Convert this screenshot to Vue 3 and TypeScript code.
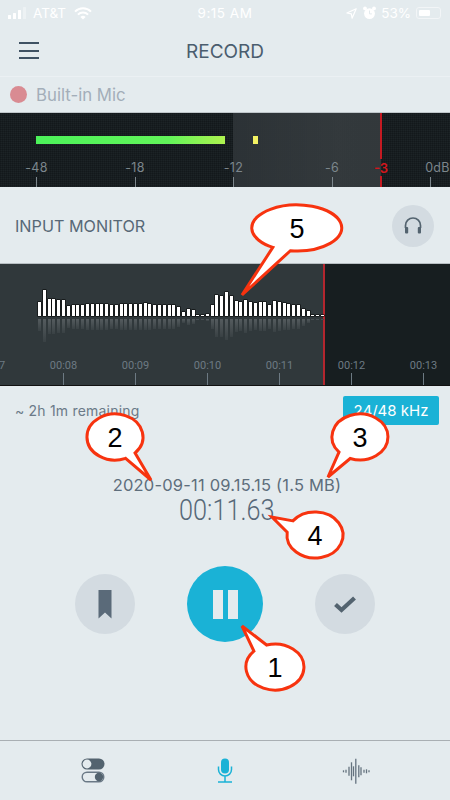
<script setup lang="ts">
const peaks = [
  14, 26, 17, 17, 16, 16, 10, 11, 11, 11.5, 12, 12.5, 12, 12, 12, 11, 11, 12, 12, 12,
  12, 12, 13, 12, 11, 11, 11, 11.5, 11, 9, 4, 7, 6, 1.5, 1.5, 2, 11.5, 21, 20, 24,
  20, 15, 14, 16, 14, 13, 14, 14, 11, 15, 14, 13, 12.5, 11, 11.5, 7.5, 5, 1.5, 1.5, 1.5,
]
const seconds = ['00:07', '00:08', '00:09', '00:10', '00:11', '00:12', '00:13']
const levels = ['-48', '-18', '-12', '-6', '0dB']
const spectrum = [
  [342.5, 2], [345, 3], [348, 9], [350.5, 18], [352.5, 10], [354.8, 25], [357.8, 12], [360, 8], [363, 3], [365.5, 4], [368, 2],
]

interface Callout {
  label: string
  cx: number
  cy: number
  rx: number
  ry: number
  a: [number, number]
  tip: [number, number]
  b: [number, number]
}
const callouts: Callout[] = [
  { label: '1', cx: 275, cy: 667, rx: 29, ry: 23, a: [267, 646], tip: [242, 626], b: [255, 652] },
  { label: '2', cx: 115, cy: 437, rx: 28, ry: 23, a: [126, 459], tip: [151, 480], b: [135, 453] },
  { label: '3', cx: 360, cy: 437, rx: 28, ry: 23, a: [338, 453], tip: [328, 477], b: [350, 459] },
  { label: '4', cx: 315, cy: 535, rx: 28, ry: 23, a: [293, 521], tip: [272, 517], b: [285, 532] },
  { label: '5', cx: 297, cy: 228, rx: 45, ry: 23, a: [272, 248], tip: [242, 295], b: [290, 252] },
]
// snap the tail base onto the ellipse so the arc keeps its radii
function onEllipse(c: Callout, p: [number, number]) {
  const t = Math.atan2((p[1] - c.cy) / c.ry, (p[0] - c.cx) / c.rx)
  return `${(c.cx + c.rx * Math.cos(t)).toFixed(1)} ${(c.cy + c.ry * Math.sin(t)).toFixed(1)}`
}
function bubble(c: Callout) {
  return `M${onEllipse(c, c.a)} L${c.tip[0]} ${c.tip[1]} L${onEllipse(c, c.b)} A${c.rx} ${c.ry} 0 1 0 ${onEllipse(c, c.a)} Z`
}
</script>

<template>
  <div class="screen">
    <div class="status">
      <div class="status-left">
        <svg width="19" height="12" viewBox="0 0 19 12" fill="#fff">
          <rect x="0" y="8" width="3" height="4" rx="0.5" />
          <rect x="5" y="6" width="3" height="6" rx="0.5" />
          <rect x="10" y="3" width="3" height="9" rx="0.5" />
          <rect x="15" y="0" width="3" height="12" rx="0.5" opacity="0.35" />
        </svg>
        <span>AT&amp;T</span>
        <svg class="wifi" width="18" height="13" viewBox="0 0 18 13" fill="none" stroke="#fff" stroke-width="2">
          <path d="M1 4.6a11.5 11.5 0 0 1 16 0" />
          <path d="M3.9 7.6a7.4 7.4 0 0 1 10.2 0" />
          <path d="M9 12.6 6.4 9.9a3.8 3.8 0 0 1 5.2 0Z" fill="#fff" stroke="none" />
        </svg>
      </div>
      <div class="clock">9:15 AM</div>
      <div class="status-right">
        <svg width="11" height="11" viewBox="0 0 11 11" fill="none" stroke="#fff" stroke-width="1.2">
          <path d="M10.2 0.8 0.9 5 5.3 5.8 6.1 10.2Z" stroke-linejoin="round" />
        </svg>
        <svg class="alarm" width="13" height="14" viewBox="0 0 13 14" fill="#fff">
          <circle cx="6.5" cy="7.6" r="5.4" />
          <circle cx="2" cy="2.4" r="1.9" />
          <circle cx="11" cy="2.4" r="1.9" />
          <path d="M6.5 4.5v3.4h2.4" fill="none" stroke="#e4ebee" stroke-width="1" />
        </svg>
        <span class="pct">53%</span>
        <div class="battery"><i></i></div>
      </div>
    </div>

    <header class="nav">
      <button class="menu" aria-label="Menu"><i></i><i></i><i></i></button>
      <h1>RECORD</h1>
    </header>

    <div class="source">
      <span class="rec-dot"></span>
      <span>Built-in Mic</span>
    </div>

    <section class="meter">
      <div class="hot-zone"></div>
      <div class="bar-row">
        <div class="level"></div>
        <div class="peak"></div>
      </div>
      <div class="scale">
        <div v-for="l in levels" :key="l" class="mark">
          <span>{{ l }}</span>
          <i></i>
        </div>
      </div>
      <div class="limit">
        <i class="limit-top"></i>
        <span>-3</span>
        <i class="limit-bottom"></i>
      </div>
    </section>

    <div class="monitor">
      <span>INPUT MONITOR</span>
      <button class="round small" aria-label="Monitor">
        <svg width="20" height="20" viewBox="0 0 20 20" fill="none" stroke="#53636f" stroke-width="1.7">
          <path d="M2.5 12V9.5a7.5 7.5 0 0 1 15 0V12" />
          <rect x="2" y="11" width="3.2" height="6.6" rx="1" fill="#53636f" stroke="none" />
          <rect x="14.8" y="11" width="3.2" height="6.6" rx="1" fill="#53636f" stroke="none" />
        </svg>
      </button>
    </div>

    <section class="wave">
      <div class="played"></div>
      <div class="tracks">
        <div class="upper">
          <i v-for="(p, i) in peaks" :key="i" :style="{ height: p + 'px' }"></i>
        </div>
        <div class="lower">
          <i v-for="(p, i) in peaks" :key="i" :style="{ height: p * 0.88 + 'px' }"></i>
        </div>
      </div>
      <div class="ruler">
        <div v-for="s in seconds" :key="s" class="tick">
          <span>{{ s }}</span>
          <i></i>
        </div>
      </div>
    </section>

    <section class="info">
      <div class="info-top">
        <span>~ 2h 1m remaining</span>
        <span class="rate">24/48 kHz</span>
      </div>
      <div class="file">2020-09-11 09.15.15 (1.5 MB)</div>
      <div class="elapsed">00:11.63</div>
    </section>

    <div class="controls">
      <button class="round" aria-label="Bookmark">
        <svg width="14" height="29" viewBox="0 0 14 29" fill="#5a6a79"><path d="M0.5 0h13v28.5L7 22.5 0.5 28.5Z" /></svg>
      </button>
      <button class="round main" aria-label="Pause"><i></i><i></i></button>
      <button class="round" aria-label="Finish">
        <svg width="22" height="17" viewBox="0 0 22 17" fill="none" stroke="#53636f" stroke-width="4.2"><path d="M1.5 8.5 7.5 14 20.5 2" /></svg>
      </button>
    </div>

    <nav class="tabs">
      <svg width="24" height="25" viewBox="0 0 24 25">
        <rect x="0.5" y="0.5" width="23" height="11" rx="5.5" fill="#53636f" />
        <circle cx="6" cy="6" r="4.4" fill="#e4ebee" />
        <rect x="1.2" y="14.2" width="21.6" height="9.6" rx="4.8" fill="none" stroke="#6a7986" stroke-width="1.4" />
        <circle cx="18" cy="19" r="4.2" fill="#53636f" />
      </svg>
      <svg width="16" height="25" viewBox="0 0 16 25" fill="none" stroke="#1ab2d6" stroke-width="1.5">
        <rect x="4" y="0.5" width="8" height="15" rx="4" fill="#1ab2d6" stroke="none" />
        <path d="M1.5 8.5v3a6.5 6.5 0 0 0 13 0v-3M8 18v6M1 24h14" />
      </svg>
      <svg width="30" height="26" viewBox="341 759 30 26" stroke="#65737f" stroke-width="1.3">
        <line v-for="[x, h] in spectrum" :key="x" :x1="x" :x2="x" :y1="772.3 - h / 2" :y2="772.3 + h / 2" />
      </svg>
    </nav>

    <svg class="notes" width="450" height="800" viewBox="0 0 450 800">
      <g v-for="c in callouts" :key="c.label">
        <path :d="bubble(c)" fill="#fff" stroke="#f7330f" stroke-width="3" stroke-linejoin="miter" />
        <text :x="c.cx" :y="c.cy + 10" text-anchor="middle">{{ c.label }}</text>
      </g>
    </svg>
  </div>
</template>

<style>
body {
  background: #e4ebee;
}
</style>

<style scoped>
.screen {
  position: relative;
  width: 450px;
  height: 800px;
  overflow: hidden;
  display: flex;
  flex-direction: column;
  background: #e4ebee;
  font-family: Inter, "Liberation Sans", sans-serif;
  color: #53636f;
}
button {
  border: none;
  padding: 0;
  cursor: pointer;
}

.status {
  height: 26px;
  display: grid;
  grid-template-columns: 1fr auto 1fr;
  align-items: center;
  padding: 0 8px;
  color: #fff;
  font-size: 13.5px;
}
.status-left,
.status-right {
  display: flex;
  align-items: center;
}
.status-left span {
  margin-left: 6px;
}
.wifi {
  margin-left: 8px;
}
.status-right {
  justify-content: flex-end;
}
.alarm {
  margin-left: 6px;
}
.pct {
  margin-left: 5px;
}
.clock {
  letter-spacing: 0.5px;
}
.battery {
  width: 25px;
  height: 12px;
  margin-left: 5px;
  margin-right: 1px;
  padding: 2px;
  box-sizing: border-box;
  border: 1px solid #f2f5f7;
  border-radius: 3px;
}
.battery i {
  display: block;
  width: 11px;
  height: 100%;
  background: #fff;
  border-radius: 1px;
}

.nav {
  height: 51px;
  display: flex;
  align-items: center;
  justify-content: center;
  position: relative;
  border-bottom: 1px solid #ebf0f3;
  box-sizing: border-box;
}
.nav h1 {
  margin: 0;
  font-size: 19px;
  font-weight: 400;
  color: #4b5d6e;
}
.menu {
  position: absolute;
  left: 19px;
  top: 16px;
  width: 20px;
  display: flex;
  flex-direction: column;
  gap: 5.5px;
  background: none;
}
.menu i {
  display: block;
  height: 2px;
  background: #3f5263;
}

.source {
  height: 35px;
  display: flex;
  align-items: center;
  gap: 9px;
  padding-left: 10px;
  font-size: 16.8px;
  color: #a3aeb9;
}
.rec-dot {
  width: 17px;
  height: 17px;
  border-radius: 50%;
  background: #d98b92;
}

.meter {
  position: relative;
  height: 75px;
  box-sizing: border-box;
  border-top: 1px solid #bfc6ca;
  background-color: #1c2326;
  background-image: linear-gradient(rgba(0, 0, 0, 0.16) 1px, transparent 1px),
    linear-gradient(90deg, rgba(0, 0, 0, 0.16) 1px, transparent 1px);
  background-size: 2px 2px;
  overflow: hidden;
}
.hot-zone {
  position: absolute;
  left: 233px;
  top: 0;
  bottom: 0;
  width: 148px;
  background: linear-gradient(90deg, #2e3438, #363c3f 70%, #353b3e);
  opacity: 0.9;
}
.bar-row {
  position: relative;
  display: flex;
  align-items: flex-end;
  padding: 23px 0 0 36px;
}
.level {
  width: 189px;
  height: 8px;
  background: linear-gradient(90deg, #4cf25a, #62f45a 70%, #aef24f);
}
.peak {
  width: 5px;
  height: 8px;
  margin-left: 28px;
  background: #f3f263;
}
.scale {
  position: absolute;
  left: -12.75px;
  bottom: 0;
  display: flex;
}
.mark {
  width: 98.5px;
  display: flex;
  flex-direction: column;
  align-items: center;
  color: #7c868c;
  font-size: 12.5px;
}
.mark span {
  letter-spacing: 0.3px;
  line-height: 16px;
}
.mark:last-child span {
  margin-left: 14px;
}
.mark i {
  display: block;
  width: 1px;
  height: 10px;
  margin-top: 1px;
  background: #7c868c;
}
.limit {
  position: absolute;
  left: 373px;
  top: 0;
  bottom: 0;
  width: 16px;
  display: flex;
  flex-direction: column;
  align-items: center;
  color: #d4161c;
  font-size: 13px;
  font-weight: 600;
}
.limit span {
  line-height: 16px;
  margin-top: 1px;
}
.limit i {
  display: block;
  width: 1.5px;
  background: #c41a22;
}
.limit-top {
  height: 46px;
}
.limit-bottom {
  height: 11px;
}

.monitor {
  height: 76px;
  display: flex;
  align-items: center;
  justify-content: space-between;
  padding: 2px 16px 0 15px;
  box-sizing: border-box;
  font-size: 16.2px;
  color: #576877;
}

.round {
  width: 60px;
  height: 60px;
  border-radius: 50%;
  background: #d3dbe1;
  display: flex;
  align-items: center;
  justify-content: center;
}
.round.small {
  width: 42px;
  height: 42px;
}

.wave {
  position: relative;
  height: 123px;
  box-sizing: border-box;
  border-top: 1px solid #b7bec2;
  border-bottom: 1px solid #111;
  background: #171e20;
  overflow: hidden;
}
.played {
  position: absolute;
  left: 0;
  top: 0;
  bottom: 0;
  width: 323px;
  border-right: 2px solid #b3262e;
  background: #30383b;
}
.tracks {
  position: relative;
  padding: 16px 0 0 38px;
}
.upper,
.lower {
  display: flex;
  gap: 1.8px;
}
.upper {
  height: 36px;
  align-items: flex-end;
}
.lower {
  height: 28px;
  margin-top: 3px;
  align-items: flex-start;
}
.upper i {
  width: 3px;
  background: #fff;
  box-shadow: 0 0 0 0.5px #000;
}
.lower i {
  width: 3px;
  background: linear-gradient(#555c5f, #394144);
}
.ruler {
  position: absolute;
  left: -44.5px;
  bottom: 0;
  display: flex;
}
.tick {
  width: 72px;
  display: flex;
  flex-direction: column;
  align-items: center;
  color: #6d7a83;
  font-family: Roboto, sans-serif;
  font-size: 11px;
}
.tick i {
  display: block;
  width: 1px;
  height: 12px;
  margin-top: 1px;
  background: #6d7a83;
}

.info {
  height: 148px;
  padding: 10px 11px 0 15px;
  box-sizing: border-box;
  display: flex;
  flex-direction: column;
  align-items: center;
}
.info-top {
  align-self: stretch;
  display: flex;
  justify-content: space-between;
  align-items: center;
  font-size: 14px;
  letter-spacing: 0.2px;
  color: #6b7a88;
}
.rate {
  width: 96px;
  height: 29px;
  line-height: 29px;
  text-align: center;
  background: #1ab2d6;
  color: #fff;
  font-size: 15px;
  letter-spacing: 0;
  border-radius: 2px;
}
.file {
  margin-top: 50px;
  font-size: 16.5px;
  letter-spacing: 0.2px;
  line-height: 20px;
  color: #5e6e7c;
}
.elapsed {
  font-family: Roboto, sans-serif;
  font-weight: 300;
  font-size: 29px;
  line-height: 30px;
  transform: scaleX(0.87);
  color: #566878;
}

.controls {
  height: 206px;
  display: flex;
  gap: 52px;
  justify-content: center;
  padding-top: 40px;
  box-sizing: border-box;
  align-items: flex-start;
}
.round.main {
  width: 76px;
  height: 76px;
  margin-top: -8px;
  gap: 5px;
  background: #1ab2d6;
}
.main i {
  display: block;
  width: 10px;
  height: 29px;
  background: #e4ebee;
}

.tabs {
  flex: 1;
  display: flex;
  align-items: center;
  padding: 0 0 0 81px;
  gap: 0;
  border-top: 1.5px solid #a9afb3;
}
.tabs svg:nth-child(1) {
  margin-right: 112px;
}
.tabs svg:nth-child(2) {
  margin-right: 109px;
}

.notes {
  position: absolute;
  left: 0;
  top: 0;
  pointer-events: none;
}
.notes text {
  font-family: "Liberation Sans", Arial, sans-serif;
  font-size: 27px;
  fill: #000;
}
</style>
